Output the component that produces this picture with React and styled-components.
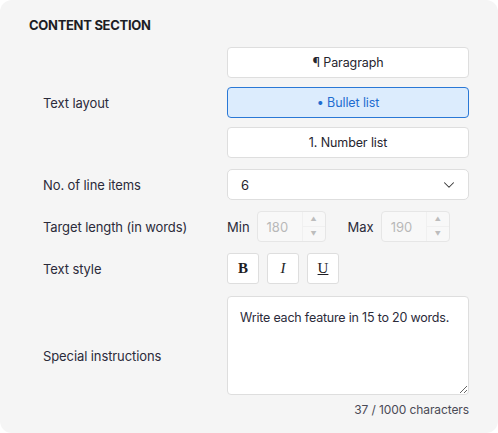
import React from 'react'
import styled, { createGlobalStyle } from 'styled-components'
import { ChevronDown } from 'lucide-react'

const GlobalStyle = createGlobalStyle`
  html, body {
    margin: 0;
    padding: 0;
    background: #ffffff;
  }
  body {
    font-family: Inter, "Noto Sans", sans-serif;
    color: #2a2a35;
  }
`

const Panel = styled.section`
  width: 498px;
  height: 433px;
  box-sizing: border-box;
  background: #f5f5f5;
  border-radius: 12px;
  padding: 17px 29px 0 29px;
`

const Heading = styled.h2`
  margin: 0 0 14px 0;
  font-size: 13px;
  font-weight: 700;
  letter-spacing: -0.3px;
  color: #1d1d24;
  line-height: 16px;
`

const Form = styled.div`
  display: grid;
  grid-template-columns: 198px 242px;
  row-gap: 11px;
  align-items: center;
`

const Label = styled.div`
  padding-left: 14px;
  font-size: 13px;
  color: #2b2b3a;
  letter-spacing: -0.1px;
`

const Stack = styled.div`
  display: flex;
  flex-direction: column;
  gap: 9px;
`

const LayoutOption = styled.button`
  height: 31px;
  box-sizing: border-box;
  border-radius: 4px;
  border: 1px solid ${p => (p.$active ? '#2a78d6' : '#dedede')};
  background: ${p => (p.$active ? '#dcecfd' : '#ffffff')};
  color: ${p => (p.$active ? '#1f6dd0' : '#25252e')};
  font-family: inherit;
  font-size: 12.5px;
  letter-spacing: -0.1px;
  cursor: pointer;
`

const Select = styled.div`
  height: 31px;
  box-sizing: border-box;
  border: 1px solid #dedede;
  border-radius: 5px;
  background: #ffffff;
  display: flex;
  align-items: center;
  justify-content: space-between;
  padding: 0 10px 0 13px;
  font-size: 13px;
  color: #25252e;
`

const RangeRow = styled.div`
  display: flex;
  align-items: center;
`

const RangeLabel = styled.span`
  font-size: 13px;
  color: #2b2b3a;
  margin-right: ${p => p.$gap}px;
`

const NumberBox = styled.div`
  width: 69px;
  height: 31px;
  box-sizing: border-box;
  border: 1px solid #e6e6e6;
  border-radius: 4px;
  background: #f8f8f8;
  display: flex;
  align-items: center;
  justify-content: space-between;
  padding-left: 9px;
  margin-right: ${p => p.$gap || 0}px;
  font-size: 13px;
  color: #b8b8b8;
`

const Spinner = styled.div`
  width: 22px;
  height: 100%;
  display: flex;
  flex-direction: column;
  border-left: 1px solid #f0f0f0;
`

const SpinHalf = styled.div`
  flex: 1;
  display: flex;
  align-items: center;
  justify-content: center;
  color: #bdbdbd;
  font-size: 6px;
  line-height: 1;
  & + & {
    border-top: 1px solid #f0f0f0;
  }
`

const StyleRow = styled.div`
  display: flex;
  gap: 8px;
`

const StyleButton = styled.button`
  width: 32px;
  height: 31px;
  box-sizing: border-box;
  border: 1px solid #dedede;
  border-radius: 3px;
  background: #ffffff;
  font-family: "Liberation Serif", "DejaVu Serif", serif;
  font-size: 15px;
  color: #1d1d24;
  font-weight: ${p => (p.$bold ? 700 : 400)};
  font-style: ${p => (p.$italic ? 'italic' : 'normal')};
  text-decoration: ${p => (p.$underline ? 'underline' : 'none')};
  padding: 0;
  cursor: pointer;
`

const InstructionsCell = styled.div`
  display: flex;
  flex-direction: column;
  padding-top: 1px;
`

const TextArea = styled.textarea`
  height: 99px;
  box-sizing: border-box;
  border: 1px solid #dedede;
  border-radius: 4px;
  background: #ffffff;
  padding: 13px 6px 13px 12px;
  font-family: inherit;
  font-size: 12.5px;
  letter-spacing: -0.2px;
  color: #2b2b3a;
  resize: vertical;
  outline: none;
`

const Counter = styled.div`
  text-align: right;
  font-size: 12px;
  letter-spacing: -0.1px;
  color: #4a4a55;
  margin-top: 7px;
`

const instructions = 'Write each feature in 15 to 20 words.'

export default function App() {
  return (
    <>
      <GlobalStyle />
      <Panel>
        <Heading>CONTENT SECTION</Heading>
        <Form>
          <Label>Text layout</Label>
          <Stack>
            <LayoutOption>¶ Paragraph</LayoutOption>
            <LayoutOption $active>• Bullet list</LayoutOption>
            <LayoutOption>1. Number list</LayoutOption>
          </Stack>

          <Label>No. of line items</Label>
          <Select>
            <span>6</span>
            <ChevronDown size={18} strokeWidth={1.4} color="#333" />
          </Select>

          <Label>Target length (in words)</Label>
          <RangeRow>
            <RangeLabel $gap={7}>Min</RangeLabel>
            <NumberBox $gap={22}>
              180
              <Spinner>
                <SpinHalf>▲</SpinHalf>
                <SpinHalf>▼</SpinHalf>
              </Spinner>
            </NumberBox>
            <RangeLabel $gap={7}>Max</RangeLabel>
            <NumberBox>
              190
              <Spinner>
                <SpinHalf>▲</SpinHalf>
                <SpinHalf>▼</SpinHalf>
              </Spinner>
            </NumberBox>
          </RangeRow>

          <Label>Text style</Label>
          <StyleRow>
            <StyleButton $bold>B</StyleButton>
            <StyleButton $italic>I</StyleButton>
            <StyleButton $underline>U</StyleButton>
          </StyleRow>

          <Label>Special instructions</Label>
          <InstructionsCell>
            <TextArea defaultValue={instructions} />
            <Counter>{instructions.length} / 1000 characters</Counter>
          </InstructionsCell>
        </Form>
      </Panel>
    </>
  )
}
